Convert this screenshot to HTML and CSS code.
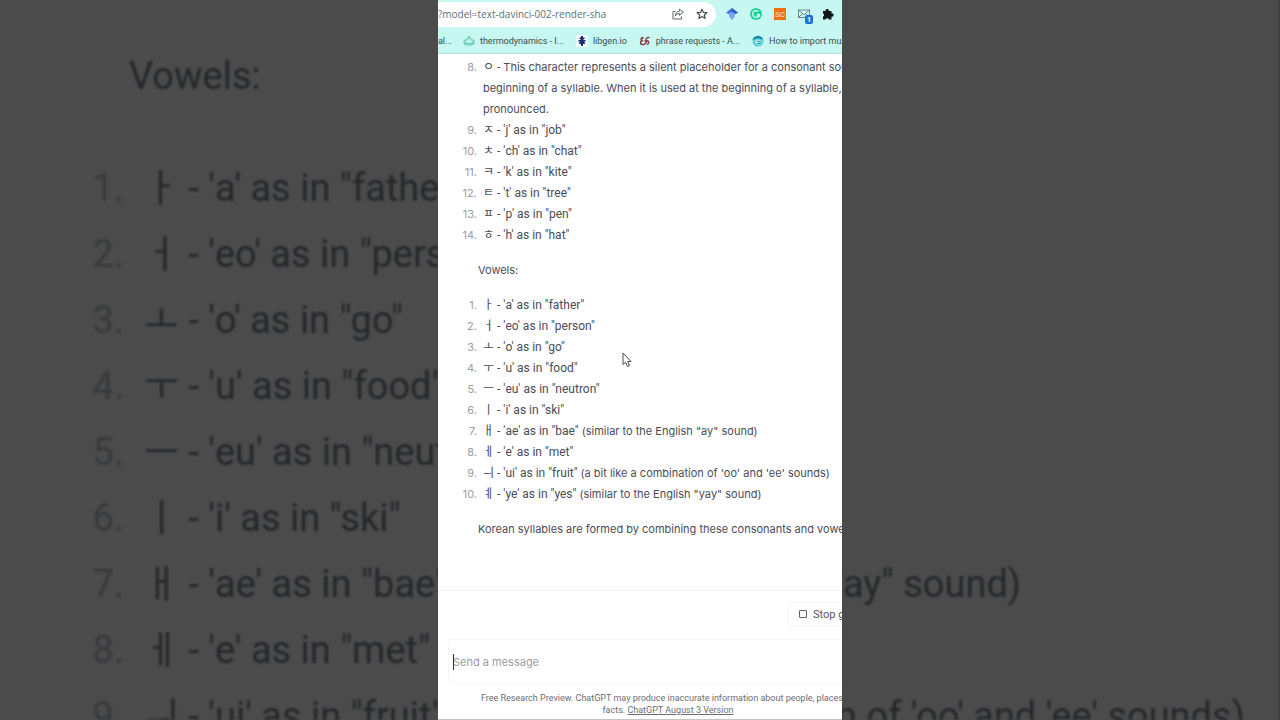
FILE: index.html
```html
<!DOCTYPE html>
<html lang="en">
<head>
    <meta charset="UTF-8">
    <meta name="viewport" content="width=device-width, initial-scale=1.0">
    <title>Korean alphabet</title>
    <link rel="stylesheet" href="styles.css">
</head>
<body>

<!-- enlarged dimmed copy behind the phone column -->
<div class="backdrop" aria-hidden="true">
  <p>Vowels:</p>
  <ol class="letters">
    <li><span class="num">1.</span><span>ㅏ - 'a' as in "father"</span></li>
    <li><span class="num">2.</span><span>ㅓ - 'eo' as in "person"</span></li>
    <li><span class="num">3.</span><span>ㅗ - 'o' as in "go"</span></li>
    <li><span class="num">4.</span><span>ㅜ - 'u' as in "food"</span></li>
    <li><span class="num">5.</span><span>ㅡ - 'eu' as in "neutron"</span></li>
    <li><span class="num">6.</span><span>ㅣ - 'i' as in "ski"</span></li>
    <li><span class="num">7.</span><span>ㅐ - 'ae' as in "bae" (similar to the English "ay" sound)</span></li>
    <li><span class="num">8.</span><span>ㅔ - 'e' as in "met"</span></li>
    <li><span class="num">9.</span><span>ㅢ - 'ui' as in "fruit" (a bit like a combination of 'oo' and 'ee' sounds)</span></li>
  </ol>
</div>

<div class="phone">
  <header class="browser">
    <div class="toolbar">
      <div class="omnibox">
        <input class="url" type="text" aria-label="Address" value="?model=text-davinci-002-render-sha">
        <button class="icon-btn" aria-label="Share">
          <svg width="12" height="12" viewBox="0 0 12 12" fill="none" stroke="#5d6668" stroke-width="1">
            <path d="M3.5 3.5H1v7.500h8.500V8.500"/>
            <path d="M7.500 1.200L11.300 4.300L7.500 7.300V5.500C5.500 5.400 4.200 6.300 3.200 8.200C3.400 5.200 5 3.300 7.500 3.100Z" stroke-linejoin="round"/>
          </svg>
        </button>
        <button class="icon-btn" aria-label="Bookmark this page">
          <svg width="12" height="12" viewBox="0 0 12 12" fill="none" stroke="#465052" stroke-width="1.200">
            <path d="M6 1.200L7.400 4.400L10.900 4.700L8.300 7L9.100 10.500L6 8.600L2.900 10.500L3.700 7L1.100 4.700L4.600 4.400Z" stroke-linejoin="round"/>
          </svg>
        </button>
      </div>
      <div class="extensions">
        <button class="icon-btn" aria-label="Scholar">
          <svg width="12" height="12" viewBox="0 0 12 12">
            <path d="M6 0L12 4.800L9.500 6H2.500L0 4.800Z" fill="#3e74dc"/>
            <path d="M2.800 5.500C4 3.900 8 3.900 9.200 5.500L8.600 9L6 12L3.400 9Z" fill="#7aa4ee"/>
            <path d="M6 0L12 4.800L9.200 5.800L6 3.800Z" fill="#2f5ec0"/>
          </svg>
        </button>
        <button class="icon-btn" aria-label="Grammar">
          <svg width="12" height="12" viewBox="0 0 12 12">
            <circle cx="6" cy="6" r="6" fill="#1fd49a"/>
            <path d="M8.300 3.600A3.300 3.300 0 1 0 9.200 6.600H6.800M9.200 6.600V9" fill="none" stroke="#e9fff8" stroke-width="1.200"/>
          </svg>
        </button>
        <button class="icon-btn sc" aria-label="SC">SC</button>
        <button class="icon-btn mail" aria-label="Mail">
          <svg width="12" height="10" viewBox="0 0 12 10" fill="none" stroke="#71898c" stroke-width="1">
            <rect x="0.500" y="1" width="11" height="7.500"/>
            <path d="M0.500 1L6 5.800L11.500 1M0.500 8.500L4.500 4.500M11.500 8.500L7.500 4.500"/>
          </svg>
          <span class="badge">1</span>
        </button>
        <button class="icon-btn" aria-label="Extensions">
          <svg width="12" height="12" viewBox="0 0 12 12" fill="#111719">
            <path d="M1 3H3.600A1.700 1.700 0 1 1 6.900 3H9.500V5.400A1.700 1.700 0 1 1 9.500 8.700V11.500H6.800A1.600 1.600 0 0 0 3.700 11.500H1V8.600A1.600 1.600 0 0 0 1 5.600Z"/>
          </svg>
        </button>
      </div>
    </div>
    <nav class="bookmarks">
      <a href="#" class="cut">al...</a>
      <a href="#">
        <svg width="12" height="12" viewBox="0 0 12 12" fill="none" stroke="#5ec5b4" stroke-width="1.200">
          <path d="M6 1.500C7 3 8.200 3.600 8 5.500M6 1.500C5 3 3.800 3.600 4 5.500M3 4.500C0 6 0 10 6 10S12 6 9 4.500M2 7.500C4 8.800 8 8.800 10 7.500"/>
        </svg>
        thermodynamics - I...
      </a>
      <a href="#">
        <svg width="12" height="12" viewBox="0 0 12 12">
          <rect width="12" height="12" fill="#f2fcff"/>
          <path d="M5 1H7V2.500H8.500V4H7.500V5H9.500V6.800H8V7.500H9V9H7V11H5V9H3V7.500H4V6.800H2.500V5H4.500V4H3.500V2.500H5Z" fill="#1b2f78"/>
        </svg>
        libgen.io
      </a>
      <a href="#">
        <svg width="12" height="12" viewBox="0 0 12 12" fill="none" stroke="#8b2e3e" stroke-width="1.400">
          <path d="M4.500 3.500C3.500 2.200 1.500 3 2.200 4.800C2.700 5.800 4 5.500 4 5.500C1 5.500 0.800 9.300 3.500 9.600C6.500 9.800 7.600 7.500 7 5.500C6.700 3.500 8.500 2 10.500 2.500M5.500 6H9C10.300 7.200 9.500 9.300 8 9.300"/>
        </svg>
        phrase requests - A...
      </a>
      <a href="#">
        <svg width="12" height="12" viewBox="0 0 12 12">
          <circle cx="6" cy="6" r="5.500" fill="#4fcfd6"/>
          <path d="M0.800 4C3.500 0 9 0.500 11.200 4.500L8 3.500C5 2.500 3 3.200 0.800 5Z" fill="#176f9e"/>
          <path d="M3 6C5.500 3.800 9.500 4.500 10 6.500L5.500 7.200L9.500 8C8 10.800 3.500 10 3 6Z" fill="#e4fff5"/>
          <path d="M4.500 6.200H9M5 8.500H8.500" stroke="#2186b8" stroke-width="1"/>
        </svg>
        How to import mu...
      </a>
    </nav>
  </header>

  <main class="chat">
    <ol class="letters" start="8">
      <li><span class="num">8.</span><span>ㅇ - <span class="prose">This character represents a silent placeholder for a consonant sound at the<br>beginning of a syllable. When it is used at the beginning of a syllable, it is not<br>pronounced.</span></span></li>
      <li><span class="num">9.</span><span>ㅈ - 'j' as in "job"</span></li>
      <li><span class="num">10.</span><span>ㅊ - 'ch' as in "chat"</span></li>
      <li><span class="num">11.</span><span>ㅋ - 'k' as in "kite"</span></li>
      <li><span class="num">12.</span><span>ㅌ - 't' as in "tree"</span></li>
      <li><span class="num">13.</span><span>ㅍ - 'p' as in "pen"</span></li>
      <li><span class="num">14.</span><span>ㅎ - 'h' as in "hat"</span></li>
    </ol>
    <p class="prose">Vowels:</p>
    <ol class="letters">
      <li><span class="num">1.</span><span>ㅏ - 'a' as in "father"</span></li>
      <li><span class="num">2.</span><span>ㅓ - 'eo' as in "person"</span></li>
      <li><span class="num">3.</span><span>ㅗ - 'o' as in "go"</span></li>
      <li><span class="num">4.</span><span>ㅜ - 'u' as in "food"</span></li>
      <li><span class="num">5.</span><span>ㅡ - 'eu' as in "neutron"</span></li>
      <li><span class="num">6.</span><span>ㅣ - 'i' as in "ski"</span></li>
      <li><span class="num">7.</span><span>ㅐ - 'ae' as in "bae" <span class="prose">(similar to the English "ay" sound)</span></span></li>
      <li><span class="num">8.</span><span>ㅔ - 'e' as in "met"</span></li>
      <li><span class="num">9.</span><span>ㅢ - 'ui' as in "fruit" <span class="prose">(a bit like a combination of 'oo' and 'ee' sounds)</span></span></li>
      <li><span class="num">10.</span><span>ㅖ - 'ye' as in "yes" <span class="prose">(similar to the English "yay" sound)</span></span></li>
    </ol>
    <p class="prose">Korean syllables are formed by combining these consonants and vowels</p>
  </main>

  <footer class="composer">
    <div class="actions">
      <button class="stop">
        <svg width="8" height="8" viewBox="0 0 8 8" fill="none" stroke="#62636c"><rect x="0.500" y="0.500" width="7" height="7" rx="0.500"/></svg>
        Stop generating
      </button>
    </div>
    <div class="message">
      <input type="text" placeholder="Send a message" aria-label="Send a message">
      <span class="caret"></span>
    </div>
    <div class="note">Free Research Preview. ChatGPT may produce inaccurate information about people, places, or<br>facts. <a href="#">ChatGPT August 3 Version</a></div>
  </footer>

  <svg class="pointer" width="10" height="16" viewBox="0 0 10 16">
    <path d="M1 1V12.500L3.600 10.200L5.500 14.500L7.500 13.600L5.700 9.500H9Z" fill="#fff" stroke="#4c4c50" stroke-width="1"/>
  </svg>
</div>

</body>
</html>
```
FILE: styles.css
```css
* {
  box-sizing: border-box;
}

body {
  margin: 0;
  height: 100vh;
  overflow: hidden;
  position: relative;
  display: flex;
  justify-content: center;
  background: #4b4b4b;
  font-family: Roboto, "Noto Sans CJK KR", sans-serif;
}

p, ol {
  margin: 0;
  padding: 0;
}

button {
  border: none;
  background: none;
  padding: 0;
  font-family: inherit;
}

.letters {
  list-style: none;
}

.letters li {
  display: flex;
}

.num {
  flex: none;
  text-align: right;
}

/* backdrop */
.backdrop {
  position: absolute;
  inset: 0;
  overflow: hidden;
  white-space: nowrap;
  padding-top: 43px;
  border-right: 1px solid #2b2b2b;
  font-size: 38px;
  line-height: 66px;
  color: #25272b;
  filter: blur(1px);
}

.backdrop p {
  padding-left: 129px;
  margin-bottom: 46px;
}

.backdrop .num {
  width: 124px;
  margin-right: 20px;
  color: #393a3c;
}

/* phone column */
.phone {
  position: relative;
  width: 56.12vh;
  height: 100vh;
  overflow: hidden;
  display: flex;
  flex-direction: column;
  background: #fff;
  border-bottom: 1px solid #c4c4c4;
}

.browser {
  flex: none;
  background: #c6f7f0;
  border-bottom: 1px solid #b4dcd7;
  color: #3c4b4d;
  white-space: nowrap;
}

.toolbar {
  display: flex;
  align-items: center;
  height: 28px;
}

.omnibox {
  flex: 1;
  display: flex;
  align-items: center;
  gap: 12px;
  height: 25px;
  padding-right: 8px;
  background: #fff;
  border-radius: 0 13px 13px 0;
}

.url {
  flex: 1;
  min-width: 0;
  border: none;
  outline: none;
  padding: 0;
  background: none;
  font-family: "Open Sans", sans-serif;
  font-size: 10px;
  color: #5c7076;
}

.icon-btn {
  flex: none;
  display: flex;
  align-items: center;
  justify-content: center;
  width: 12px;
  height: 12px;
}

.extensions {
  display: flex;
  gap: 12px;
  padding: 0 8px 0 10px;
}

.sc {
  background: #ec7211;
  color: #ffe9cf;
  font-size: 8px;
}

.mail {
  position: relative;
}

.badge {
  position: absolute;
  left: 7px;
  top: 7px;
  width: 8px;
  height: 9px;
  border-radius: 2px;
  background: #1a6fe0;
  color: #fff;
  font-size: 8px;
  font-weight: bold;
  line-height: 9px;
}

.bookmarks {
  display: flex;
  align-items: center;
  gap: 12px;
  height: 25px;
}

.bookmarks a {
  display: flex;
  align-items: center;
  gap: 5px;
  flex: none;
  color: inherit;
  text-decoration: none;
  font-size: 9px;
}

.bookmarks .cut {
  width: 13px;
}

/* conversation */
.chat {
  flex: 1;
  display: flex;
  flex-direction: column;
  gap: 14px;
  padding-top: 3px;
  white-space: nowrap;
  font-size: 12px;
  line-height: 21px;
  color: #4a4c57;
}

.chat p {
  padding-left: 40px;
}

.prose {
  font-family: Inter, sans-serif;
  font-size: 11px;
}

.chat .num {
  width: 39px;
  margin-right: 6px;
  color: #9b9ca4;
  font-family: Inter, sans-serif;
  font-size: 11px;
}

/* composer */
.composer {
  flex: none;
  border-top: 1px solid #f3f3f4;
}

.actions {
  display: flex;
  height: 48px;
  padding: 11px 0 13px 350px;
}

.stop {
  display: flex;
  align-items: center;
  gap: 6px;
  flex: none;
  padding: 0 10px;
  border: 1px solid #f5f5f6;
  border-radius: 3px;
  font-size: 11px;
  color: #55565f;
  white-space: nowrap;
}

.message {
  position: relative;
  margin: 0 -12px 0 10px;
  border: 1px solid #f5f5f6;
  border-radius: 4px;
}

.message input {
  display: block;
  width: 100%;
  height: 43px;
  padding: 0 4px;
  border: none;
  outline: none;
  background: none;
  font-family: Inter, sans-serif;
  font-size: 11px;
  color: #4a4c57;
}

.message input::placeholder {
  color: #9b9ca4;
}

.caret {
  position: absolute;
  left: 4px;
  top: 14px;
  width: 1px;
  height: 16px;
  background: #333;
}

.note {
  margin-right: -56px;
  padding: 8px 0 3px;
  text-align: center;
  white-space: nowrap;
  font-size: 9px;
  line-height: 12px;
  color: #6c6d76;
}

.note a {
  color: inherit;
}

.pointer {
  position: absolute;
  left: 184px;
  top: 352px;
}
```
